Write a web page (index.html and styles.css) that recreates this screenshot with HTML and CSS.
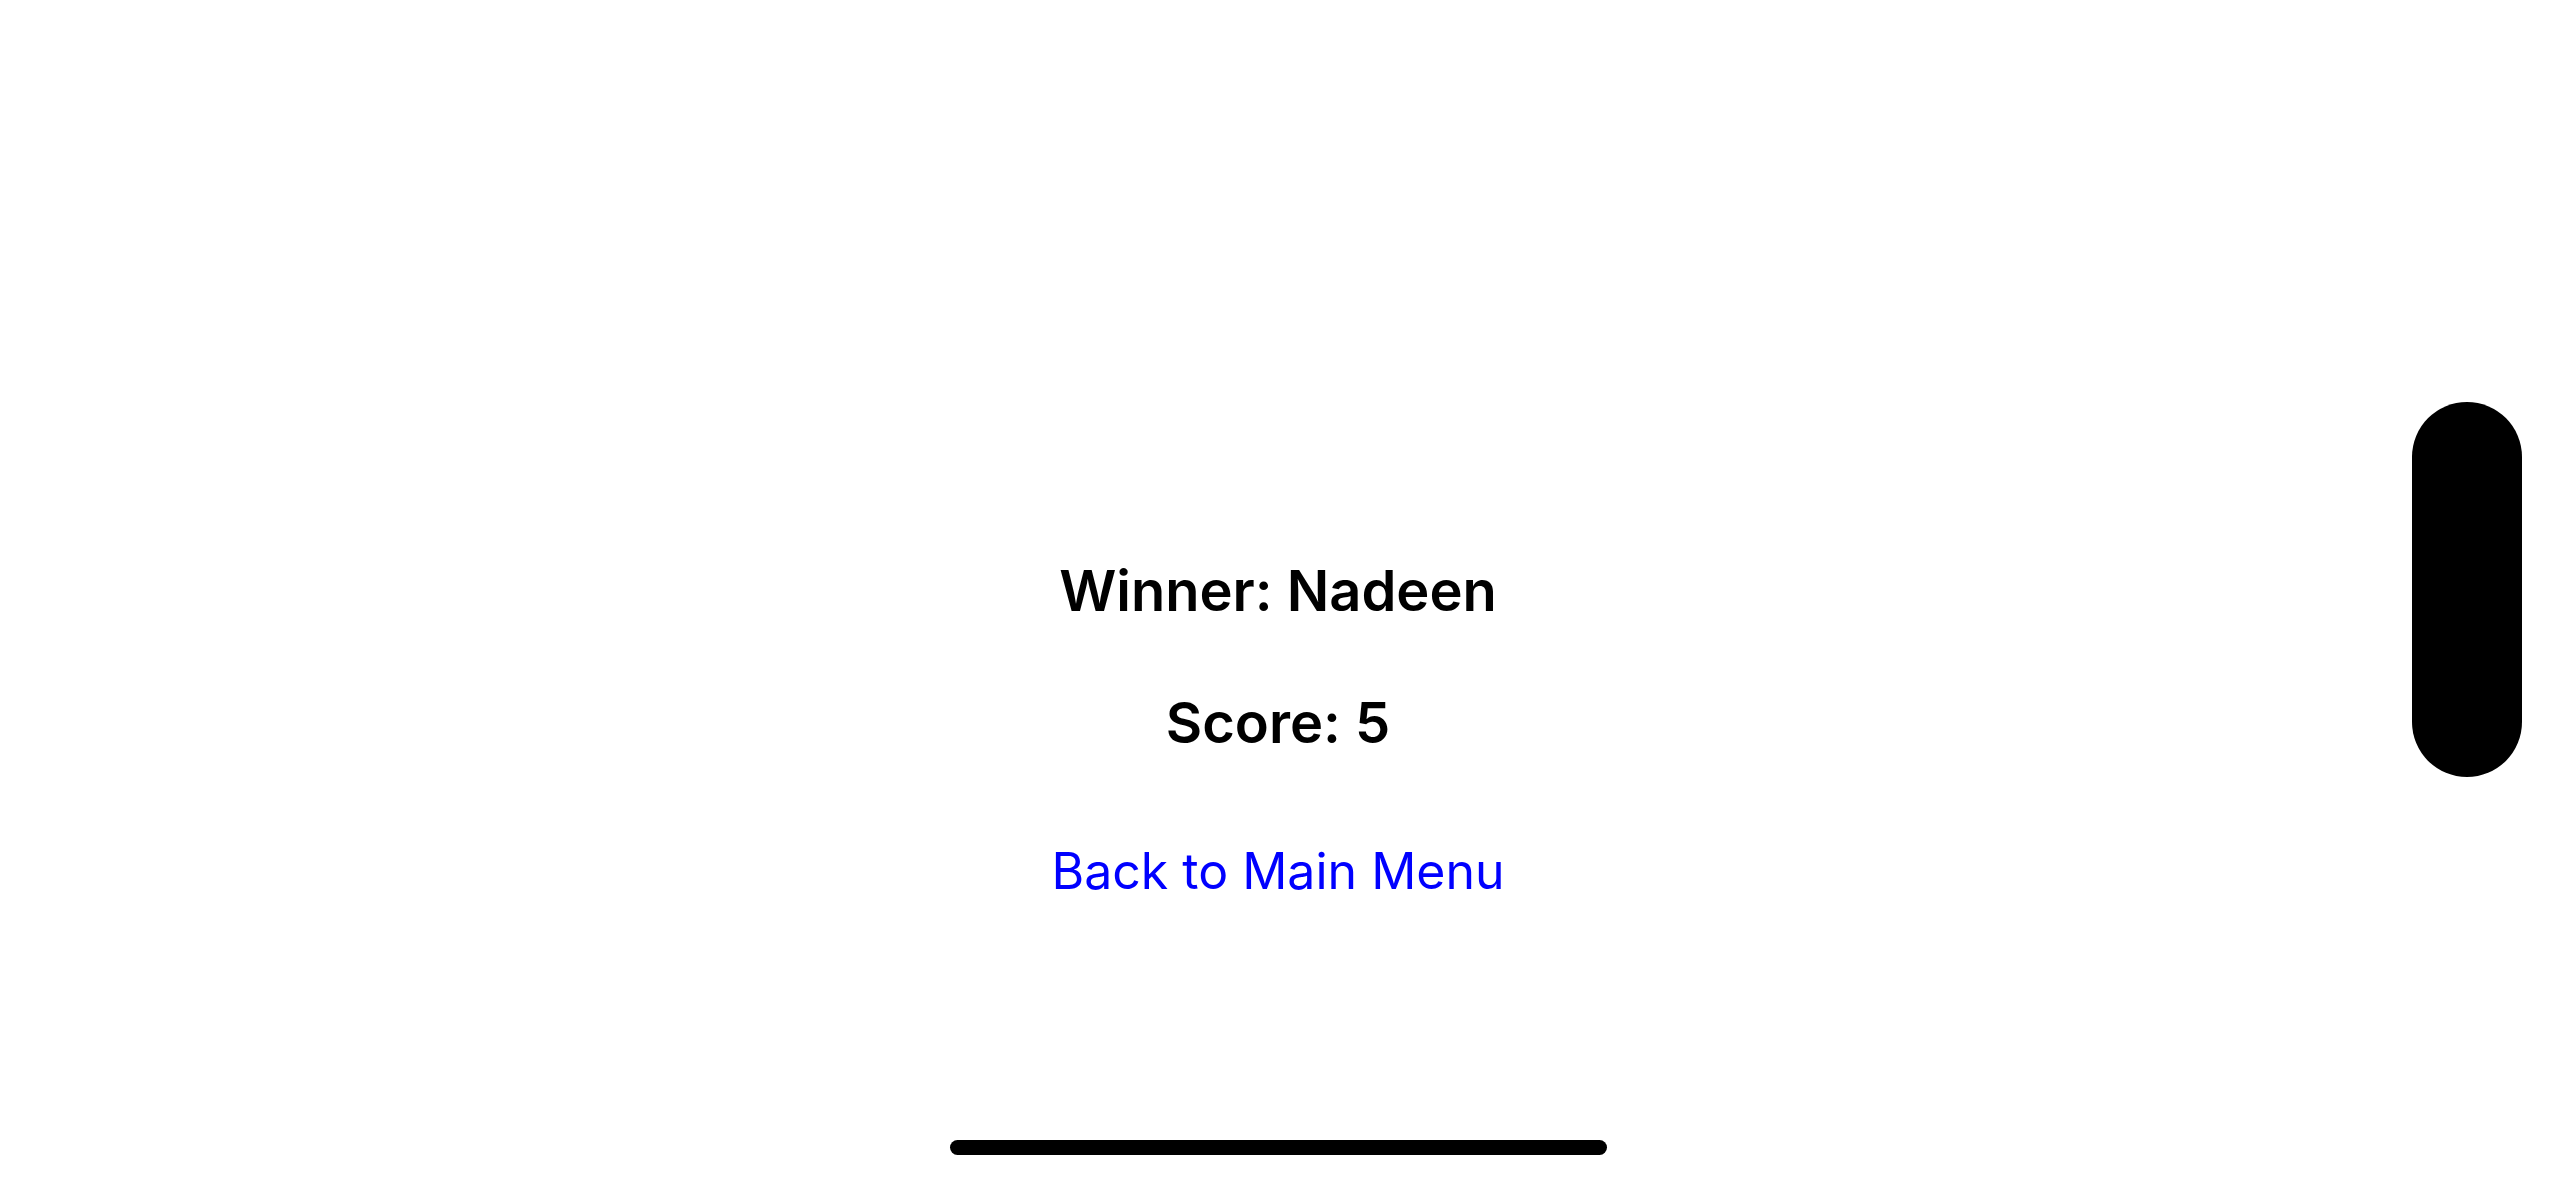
FILE: index.html
```html
<!DOCTYPE html>
<html lang="en">
<head>
<meta charset="utf-8">
<title>Game Over</title>
<link rel="stylesheet" href="styles.css">
</head>
<body>
<div class="screen">
  <main class="content">
    <h1 class="winner">Winner: Nadeen</h1>
    <h2 class="score">Score: 5</h2>
    <a class="back" href="#">Back to Main Menu</a>
  </main>
  <div class="side-pill"></div>
  <div class="home-indicator"></div>
</div>
</body>
</html>
```

FILE: styles.css
```css
html, body {
  margin: 0;
  padding: 0;
  background: #ffffff;
}

.screen {
  position: relative;
  width: 2556px;
  height: 1179px;
  overflow: hidden;
  font-family: Inter, "Noto Sans", "Liberation Sans", sans-serif;
  display: flex;
  flex-direction: column;
  align-items: center;
}

.content {
  margin-top: 556px;
  display: flex;
  flex-direction: column;
  align-items: center;
}

.winner,
.score {
  margin: 0;
  font-size: 56px;
  line-height: 70px;
  font-weight: 600;
  color: #000000;
}

.score {
  margin-top: 62px;
}

.back {
  margin-top: 80px;
  font-size: 50px;
  line-height: 66px;
  font-weight: 400;
  color: #0000ff;
  text-decoration: none;
}

.side-pill {
  position: absolute;
  left: 2412px;
  top: 402px;
  width: 110px;
  height: 375px;
  border-radius: 55px;
  background: #000000;
}

.home-indicator {
  position: absolute;
  left: 950px;
  top: 1140px;
  width: 657px;
  height: 15px;
  border-radius: 7.5px;
  background: #000000;
}
```
